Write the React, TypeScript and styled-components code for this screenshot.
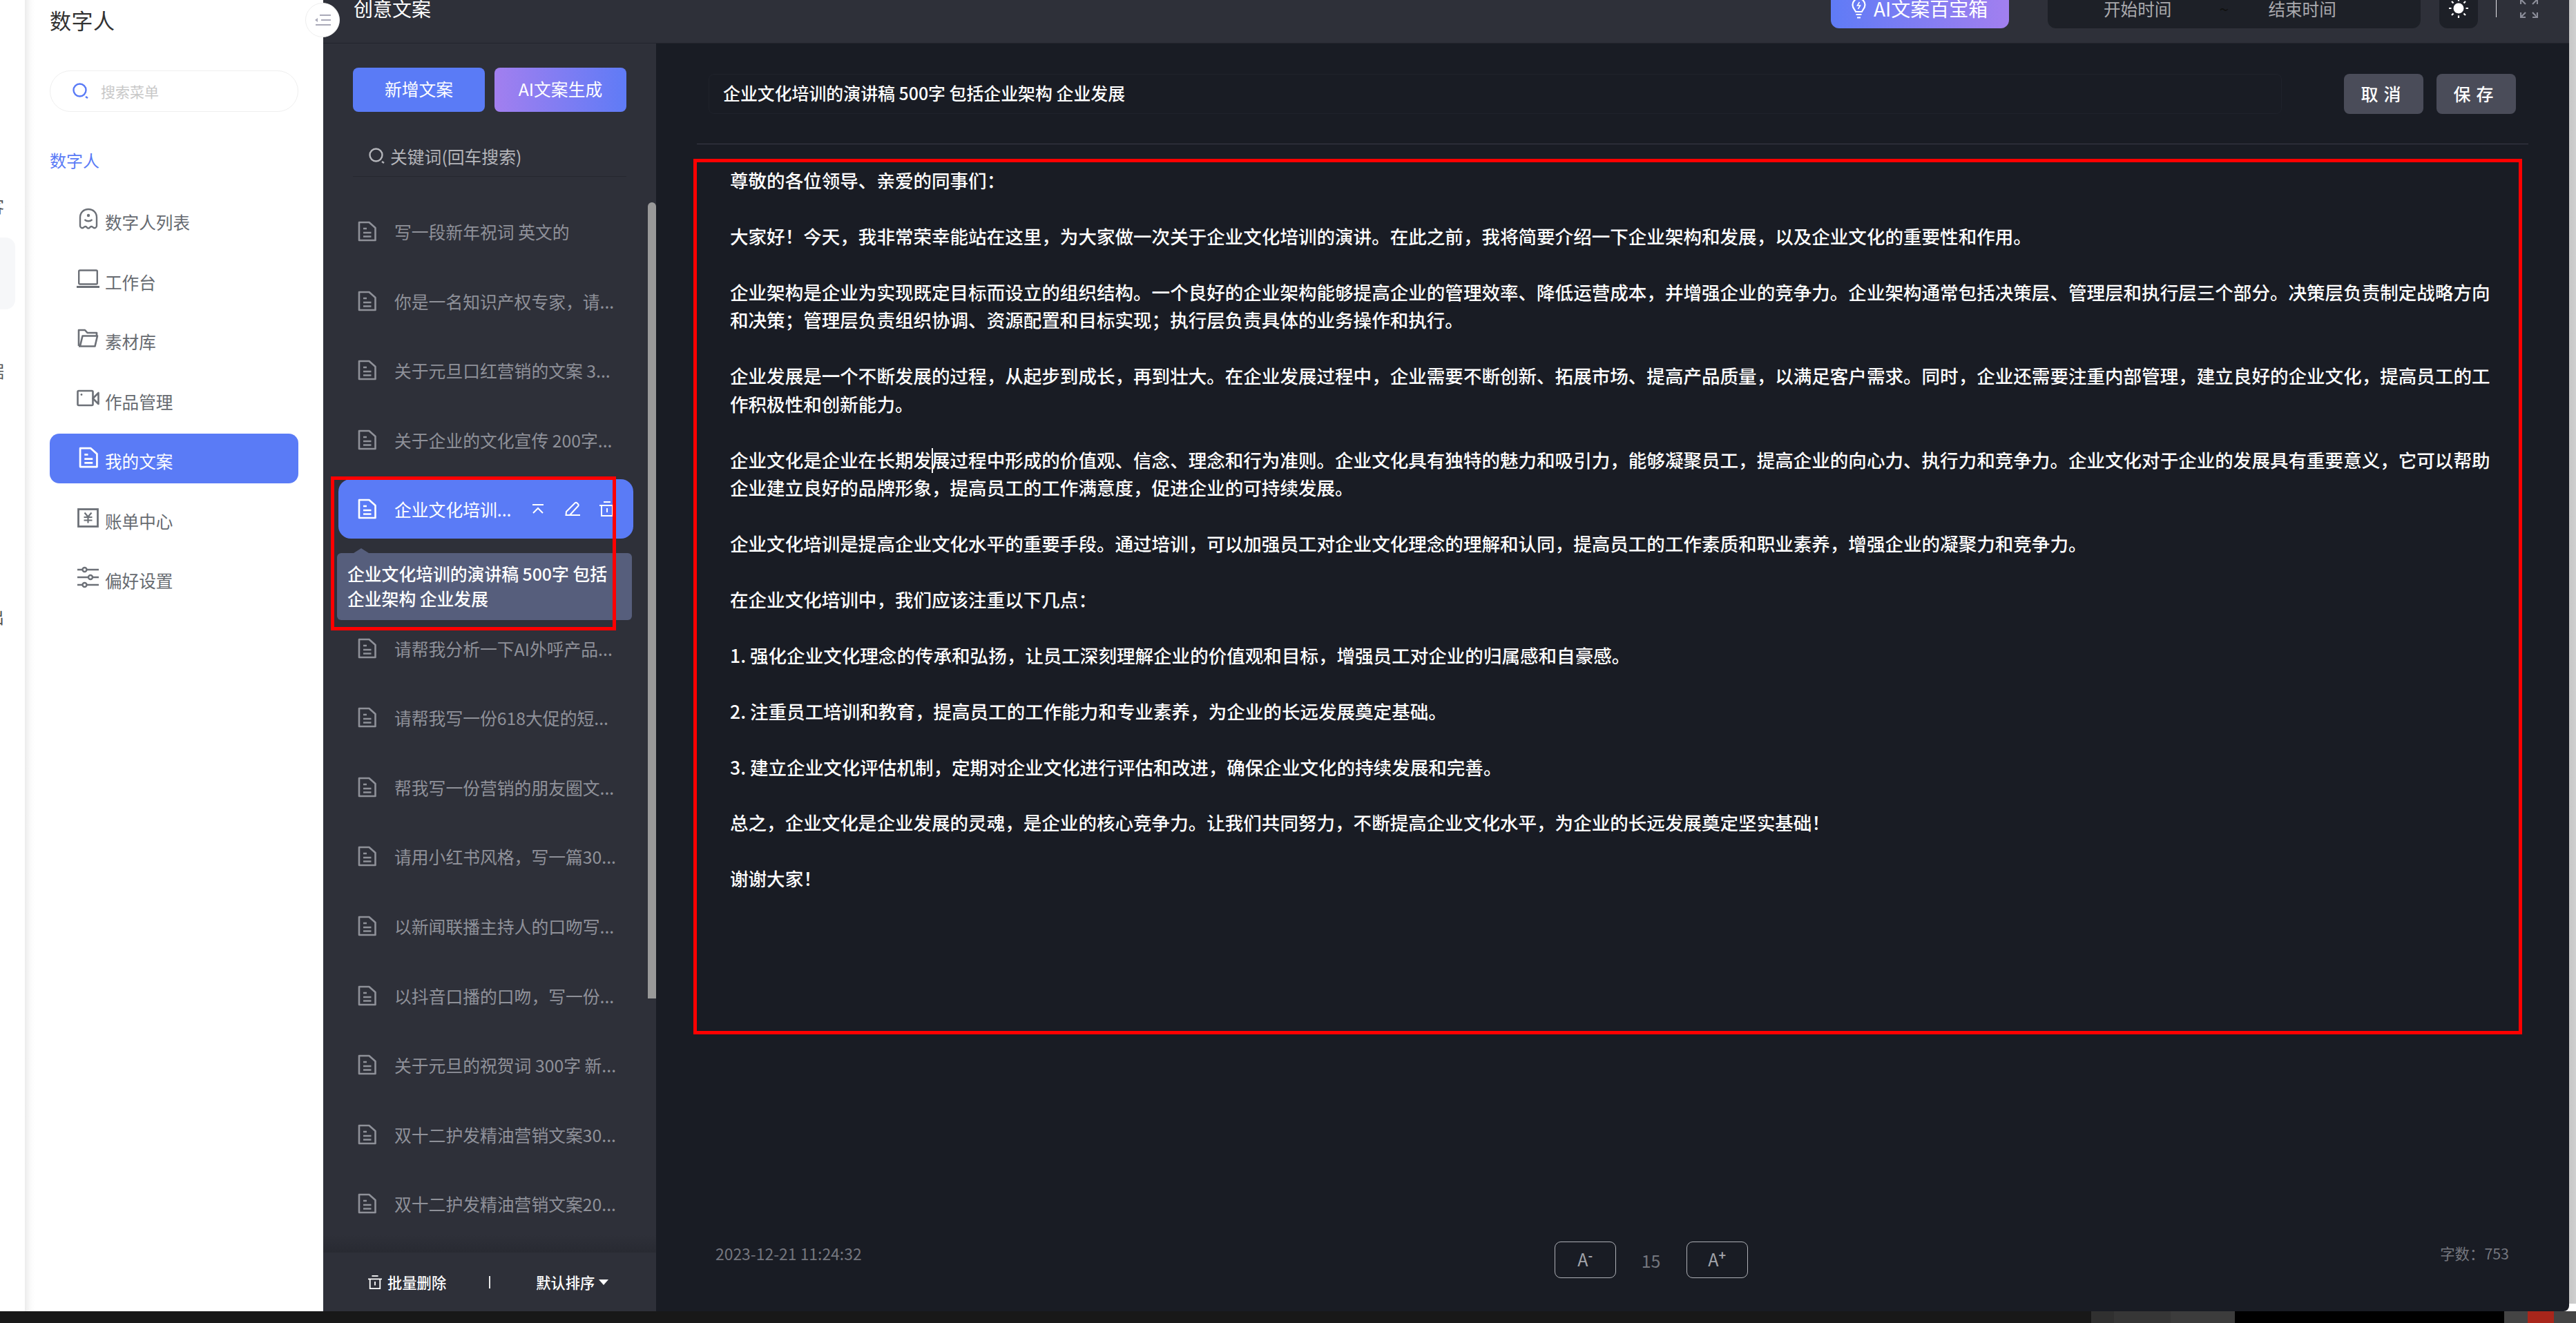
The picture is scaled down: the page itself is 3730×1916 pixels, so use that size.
import React from "react";
import styled, { createGlobalStyle } from "styled-components";

const GlobalStyle = createGlobalStyle`
  html, body {
    margin: 0;
    padding: 0;
    background: #fff;
    overflow: hidden;
    height: 100%;
  }
  * { box-sizing: border-box; }
  body {
    font-family: "Noto Sans CJK SC", "Noto Sans", sans-serif;
  }
`;

// the page in the picture is scrolled down by 18px
const Page = styled.div`
  margin-top: -18px;
  width: 3730px;
  height: 1934px;
  display: flex;
  flex-direction: column;
`;

const Shell = styled.div`
  position: relative;
  display: flex;
  height: 1917px;
  background: #fff;
`;

/* ---------- strip of the window behind ---------- */
const BackStrip = styled.div`
  width: 36px;
  padding-top: 304px;
  overflow: hidden;
  flex: none;
`;

const BackGlyph = styled.div<{ $gap: number }>`
  margin-top: ${(p) => p.$gap}px;
  margin-left: -18px;
  font-size: 24px;
  line-height: 24px;
  color: #555;
`;

const BackPanel = styled.div`
  margin-top: 34px;
  width: 22px;
  height: 104px;
  background: #f6f7f9;
  border-radius: 0 14px 14px 0;
`;

/* ---------- menu ---------- */
const Side = styled.aside`
  width: 432px;
  flex: none;
  padding: 27px 36px 0;
  background: linear-gradient(90deg, #ececec 0, #fafafa 8px, #fff 14px);
`;

const SideTitle = styled.div`
  font-size: 31px;
  line-height: 40px;
  color: #333;
  letter-spacing: 0.5px;
`;

const SearchPill = styled.div`
  margin-top: 53px;
  height: 60px;
  border: 1px solid #efefef;
  border-radius: 30px;
  display: flex;
  align-items: center;
  padding-left: 32px;
  gap: 17px;
  font-size: 21px;
  color: #c8c8c8;
`;

const SectionTitle = styled.div`
  margin-top: 54px;
  font-size: 24px;
  line-height: 32px;
  color: #5a7bf6;
`;

const MenuList = styled.div`
  margin-top: 34px;
  display: flex;
  flex-direction: column;
  gap: 14.5px;
`;

const MenuItem = styled.div<{ $active?: boolean }>`
  height: 72px;
  border-radius: 14px;
  display: flex;
  align-items: center;
  padding-left: 39px;
  font-size: 24.6px;
  color: ${(p) => (p.$active ? "#fff" : "#666a70")};
  background: ${(p) => (p.$active ? "#5a7bf6" : "transparent")};
  span {
    padding-top: 6px;
    margin-left: 8px;
  }
`;

const MenuIconBox = styled.div`
  width: 33px;
  flex: none;
  margin-top: -2px;
  display: flex;
  justify-content: center;
`;

const CollapseBtn = styled.div`
  position: absolute;
  left: 442px;
  top: 22px;
  width: 50px;
  height: 50px;
  border-radius: 50%;
  background: #fff;
  border: 1px solid #eee;
  display: flex;
  align-items: center;
  justify-content: center;
  z-index: 3;
`;

/* ---------- dark app ---------- */
const AppColumn = styled.div`
  width: 3252px;
  flex: none;
  display: flex;
  flex-direction: column;
  background: #191c24;
  border-bottom-right-radius: 8px;
  overflow: hidden;
`;

const TopBar = styled.header`
  height: 81px;
  flex: none;
  display: flex;
  align-items: flex-start;
  background: #2e3039;
  border-bottom: 1px solid #23252d;
  padding-left: 44px;
  padding-right: 45px;
`;

const TopTitle = styled.div`
  font-size: 28px;
  line-height: 60px;
  color: #fff;
  margin-right: auto;
`;

const TreasureBtn = styled.div`
  width: 258px;
  height: 59px;
  border-radius: 0 0 12px 12px;
  background: linear-gradient(90deg, #5f7bf6, #a27fef);
  display: flex;
  align-items: center;
  padding-left: 30px;
  gap: 11px;
  font-size: 28px;
  color: #fff;
`;

const RangeBox = styled.div`
  margin-left: 56px;
  width: 540px;
  height: 59px;
  border-radius: 0 0 12px 12px;
  background: #1d2027;
  display: flex;
  align-items: center;
  padding-left: 81px;
  font-size: 24.6px;
  color: #a9a9ad;
`;

const RangeSep = styled.span`
  margin: 0 55px 0 69px;
  width: 16px;
  color: #111;
`;

const ThemeBtn = styled.div`
  margin-left: 27px;
  width: 56px;
  height: 59px;
  border-radius: 0 0 12px 12px;
  background: #1d2027;
  display: flex;
  align-items: center;
  justify-content: center;
`;

const TopDivider = styled.div`
  margin-left: 26px;
  width: 1px;
  height: 43px;
  background: #e4e4e8;
`;

const FullscreenBox = styled.div`
  margin-left: 34px;
  margin-top: 16px;
  display: flex;
`;

const Body = styled.div`
  flex: 1;
  display: flex;
  min-height: 0;
`;

/* ---------- list of copy ---------- */
const ListPanel = styled.section`
  width: 482px;
  flex: none;
  display: flex;
  flex-direction: column;
  background: #2e3039;
  position: relative;
`;

const ListHead = styled.div`
  padding: 35px 43px 0;
`;

const ButtonRow = styled.div`
  display: flex;
  gap: 14px;
`;

const ActionBtn = styled.div<{ $gradient?: boolean }>`
  width: 191px;
  height: 64px;
  border-radius: 8px;
  display: flex;
  align-items: center;
  justify-content: center;
  padding-bottom: 5px;
  font-size: 24.8px;
  color: #fff;
  background: ${(p) =>
    p.$gradient ? "linear-gradient(90deg, #a27fef, #5f7bf6)" : "#5a7bf6"};
`;

const KeywordRow = styled.div`
  margin-top: 38px;
  height: 56px;
  border-bottom: 1px solid #25272e;
  display: flex;
  align-items: center;
  padding: 0 0 4px 23px;
  gap: 7px;
  font-size: 24.8px;
  color: #b4b5ba;
`;

const Rows = styled.div`
  flex: 1;
  min-height: 0;
  overflow: hidden;
  position: relative;
  padding-top: 36px;
  display: flex;
  flex-direction: column;
  gap: 14.6px;
  &::after {
    content: "";
    position: absolute;
    left: 0;
    right: 0;
    bottom: 0;
    height: 26px;
    background: linear-gradient(180deg, rgba(36, 38, 45, 0), #282a32);
  }
`;

const Scroll = styled.div`
  position: absolute;
  right: 0;
  top: 37px;
  width: 12px;
  height: 1153px;
  background: #999;
  border-radius: 6px 6px 0 0;
`;

const Row = styled.div<{ $active?: boolean; $tipped?: boolean }>`
  position: relative;
  flex: none;
  margin-left: 22px;
  width: 427px;
  height: 86px;
  border-radius: 18px;
  display: flex;
  align-items: center;
  padding-left: 28px;
  gap: 26px;
  font-size: 24.8px;
  color: ${(p) => (p.$active ? "#fff" : "#8f9199")};
  background: ${(p) => (p.$active ? "#5a7bf6" : "transparent")};
  margin-bottom: ${(p) => (p.$tipped ? "100.6px" : "0")};
  white-space: nowrap;
  svg {
    flex: none;
  }
`;

const RowTools = styled.div`
  margin-left: auto;
  margin-right: 27px;
  display: flex;
  align-items: center;
  gap: 28px;
  svg:first-child {
    margin-right: 3px;
  }
`;

const Tip = styled.div`
  position: absolute;
  left: -2px;
  top: 107px;
  width: 427px;
  height: 97px;
  background: #565e7c;
  border-radius: 6px;
  padding: 11px 30px 11px 15px;
  font-size: 24.8px;
  font-weight: 500;
  line-height: 36px;
  color: #fff;
  white-space: normal;
  z-index: 2;
  &::before {
    content: "";
    position: absolute;
    left: 24px;
    top: -7px;
    border-left: 11px solid transparent;
    border-right: 11px solid transparent;
    border-bottom: 7px solid #565e7c;
  }
`;

// red annotation drawn over the selected row and its tooltip
const RowMark = styled.div`
  position: absolute;
  left: -11px;
  top: -4px;
  width: 413px;
  height: 223px;
  border: 5px solid #ff0000;
  z-index: 3;
`;

const ListFoot = styled.div`
  height: 85px;
  flex: none;
  display: flex;
  align-items: center;
  padding-left: 65px;
  font-size: 21.3px;
  font-weight: 500;
  color: #fff;
  background: #2e3039;
`;

const FootGroup = styled.div`
  display: flex;
  align-items: center;
  gap: 8px;
`;

const FootDivider = styled.div`
  margin: 0 66px 0 62px;
  width: 2px;
  height: 18px;
  background: #e8e8e8;
`;

const Caret = styled.span`
  width: 0;
  height: 0;
  margin-left: -2px;
  border-left: 7px solid transparent;
  border-right: 7px solid transparent;
  border-top: 8px solid #fff;
`;

/* ---------- editor ---------- */
const Main = styled.main`
  flex: 1;
  min-width: 0;
  padding-top: 44px;
`;

const MainHead = styled.div`
  display: flex;
  padding-left: 76px;
  gap: 19px;
`;

const TitleBox = styled.div`
  width: 2278px;
  height: 58px;
  margin-right: 71px;
  border: 1px solid #1f222b;
  border-radius: 8px;
  display: flex;
  align-items: center;
  padding: 0 0 5px 20px;
  font-size: 24.9px;
  font-weight: 500;
  color: #fff;
`;

const GreyBtn = styled.div`
  width: 115px;
  height: 58px;
  border-radius: 8px;
  background: #4a4c59;
  display: flex;
  align-items: center;
  justify-content: center;
  padding-bottom: 3px;
  font-size: 25px;
  font-weight: 500;
  letter-spacing: 8px;
  color: #fff;
`;

const HeadRule = styled.div`
  margin: 43px 0 0 59px;
  width: 2652px;
  height: 1px;
  background: #3a3c48;
`;

const RedBox = styled.div`
  position: relative;
  margin: 21px 0 0 54px;
  width: 2648px;
  height: 1268px;
  border: 5px solid #ff0000;
  padding: 6px 0 0 48px;
`;

const Copy = styled.div`
  width: 2556px;
  font-size: 26.55px;
  font-weight: 500;
  line-height: 40.45px;
  color: #fff;
  white-space: pre-wrap;
`;

const MouseBeam = styled.div`
  position: absolute;
  left: 340px;
  top: 414px;
  width: 2px;
  height: 36px;
  background: #fff;
`;

const MainFoot = styled.div`
  margin-top: 300px;
  display: flex;
  align-items: flex-start;
  padding: 0 87px 0 86px;
  line-height: 30px;
  color: #74767e;
`;

const DateNote = styled.div`
  margin-top: 2px;
  font-size: 22.9px;
`;

const SizeGroup = styled.div`
  margin-left: 1003px;
  display: flex;
  align-items: center;
`;

const SizeBtn = styled.div`
  width: 89px;
  height: 53px;
  border: 1px solid #aeb0b6;
  border-radius: 9px;
  display: flex;
  align-items: center;
  justify-content: center;
  padding-bottom: 3px;
  font-size: 25px;
  line-height: 25px;
  color: #a2a4aa;
  sup {
    font-size: 18px;
    line-height: 18px;
    font-weight: 700;
    align-self: flex-start;
    margin-top: 9px;
  }
`;

const SizeValue = styled.div`
  width: 102px;
  text-align: center;
  font-size: 25px;
  color: #74767e;
`;

const CharCount = styled.div`
  margin: 2px 0 0 auto;
  font-size: 21.4px;
`;

const RightStrip = styled.div`
  flex: 1;
  height: 1906px;
  background: linear-gradient(90deg, #c6c6c6, #d0d0d0);
`;

/* ---------- what is below the window ---------- */
const BottomBar = styled.footer`
  height: 17px;
  display: flex;
  background: #181818;
`;

const BarPiece = styled.div<{ $w: number; $c: string }>`
  width: ${(p) => p.$w}px;
  background: ${(p) => p.$c};
  flex: none;
`;

/* ---------- drawings ---------- */
const SearchIcon = ({ color, size = 24 }: { color: string; size?: number }) => (
  <svg width={size} height={size} viewBox="0 0 24 24" fill="none" stroke={color} strokeWidth="2.4">
    <circle cx="10.5" cy="10.5" r="9" />
    <path d="M19 20l3 2" />
  </svg>
);

const DocIcon = ({ color, size = 27 }: { color: string; size?: number }) => (
  <svg width={size} height={(size * 30) / 27} viewBox="0 0 27 30" fill="none" stroke={color} strokeWidth="2.6">
    <path d="M2 2h14.500L25.500 10v18H2z" strokeLinejoin="round" />
    <path d="M8 11h5M8 17h11.500M8 22.500h11.500" />
  </svg>
);

const GhostIcon = () => (
  <svg width="30" height="32" viewBox="0 0 30 32" fill="none" stroke="#6c7077" strokeWidth="2.4">
    <path d="M3 14c0-7 5-12 12-12s12 5 12 12v12c0 3-3 4-5 2.500-2-2-3.500-2-5 0-1.200 1.500-2.800 1.500-4 0-1.500-2-3-2-5 0C6 30 3 29 3 26z" />
    <circle cx="15" cy="11" r="2.200" fill="#6c7077" stroke="none" />
    <path d="M9.500 17c2.500 3 8.500 3 11 0" />
  </svg>
);

const LaptopIcon = () => (
  <svg width="33" height="28" viewBox="0 0 33 28" fill="none" stroke="#6c7077" strokeWidth="2.4">
    <rect x="3.200" y="1.500" width="26.600" height="20" rx="1.500" />
    <path d="M0 25.500h33" strokeWidth="3" />
  </svg>
);

const FolderIcon = () => (
  <svg width="31" height="28" viewBox="0 0 31 28" fill="none" stroke="#6c7077" strokeWidth="2.6">
    <path d="M2 25V2h9l3.500 4H28v4" strokeLinejoin="round" />
    <path d="M2 25.500h23.500L29 10.500H7.500L4 25" strokeLinejoin="round" />
  </svg>
);

const VideoIcon = () => (
  <svg width="33" height="26" viewBox="0 0 33 26" fill="none" stroke="#6c7077" strokeWidth="2.6">
    <rect x="1.500" y="2" width="22" height="21" rx="1.500" />
    <path d="M23.500 13L31.500 5v16z" strokeLinejoin="round" />
    <circle cx="7" cy="7.500" r="1.400" fill="#6c7077" stroke="none" />
  </svg>
);

const BillIcon = () => (
  <svg width="31" height="28" viewBox="0 0 31 28" fill="none" stroke="#6c7077" strokeWidth="2.800">
    <rect x="1.500" y="1.500" width="28" height="25" />
    <path d="M10.500 6.500l5 6 5-6M9.500 13h12M9.500 17.500h12M15.500 12.500v9" strokeWidth="2.200" />
  </svg>
);

const SlidersIcon = () => (
  <svg width="31" height="32" viewBox="0 0 31 32" fill="none" stroke="#6c7077" strokeWidth="2.400">
    <path d="M0 5h7.500M13 5h18M0 16h16M22 16h9M0 27h7.500M13 27h18" />
    <circle cx="10.500" cy="5" r="3" />
    <circle cx="19" cy="16" r="3" />
    <circle cx="10.500" cy="27" r="3" />
  </svg>
);

const CollapseIcon = () => (
  <svg width="24" height="18" viewBox="0 0 24 18" fill="none" stroke="#a9a9b8" strokeWidth="1.800">
    <path d="M8 2h16M10 9h14M2 16h22" />
    <path d="M5 6v6L1 9z" fill="#a9a9b8" stroke="none" />
  </svg>
);

const BulbIcon = () => (
  <svg width="21" height="32" viewBox="0 0 21 32" fill="none" stroke="#fff" strokeWidth="2.200">
    <path d="M6 21c-1-3-4.500-5-4.500-10a9 9 0 0 1 18 0c0 5-3.500 7-4.500 10z" />
    <path d="M6.500 25h8M8 29.500h5" />
    <path d="M11.500 7l-3 5h4l-3 5" strokeWidth="1.600" />
  </svg>
);

const SunIcon = () => (
  <svg width="28" height="28" viewBox="0 0 28 28" fill="#fff" stroke="#fff" strokeWidth="2.200">
    <circle cx="14" cy="14" r="7.500" stroke="none" />
    <path d="M14 0v3.500M14 24.500V28M0 14h3.500M24.500 14H28M4 4l2.500 2.500M21.500 21.500L24 24M4 24l2.500-2.500M21.500 6.500L24 4" />
  </svg>
);

const FullscreenIcon = () => (
  <svg width="26" height="28" viewBox="0 0 26 28" fill="none" stroke="#8b8d99" strokeWidth="2.200">
    <path d="M1 8V1h7M1 1l7 7M25 8V1h-7M25 1l-7 7M1 20v7h7M1 27l7-7M25 20v7h-7M25 27l-7-7" />
  </svg>
);

const PinTopIcon = () => (
  <svg width="16" height="16" viewBox="0 0 16 16" fill="none" stroke="#fff" strokeWidth="2">
    <path d="M0 2h16M1 14l7-7 7 7" />
  </svg>
);

const PencilIcon = () => (
  <svg width="22" height="22" viewBox="0 0 22 22" fill="none" stroke="#fff" strokeWidth="2">
    <path d="M1.500 20L2 15 14.500 2.500c1-1 2-1 3 0l1.500 1.500c1 1 1 2 0 3L7 20z" />
    <path d="M7 20h15" />
  </svg>
);

const TrashIcon = ({ w = 22 }: { w?: number }) => (
  <svg width={w} height={w} viewBox="0 0 22 22" fill="none" stroke="#fff" strokeWidth="2">
    <path d="M6 1h10M0 6h22M3 6v15h16V6M11 10v6" />
  </svg>
);

const docs = [
  "写一段新年祝词 英文的",
  "你是一名知识产权专家，请...",
  "关于元旦口红营销的文案 3...",
  "关于企业的文化宣传 200字...",
];

const docsAfter = [
  "请帮我分析一下AI外呼产品...",
  "请帮我写一份618大促的短...",
  "帮我写一份营销的朋友圈文...",
  "请用小红书风格，写一篇30...",
  "以新闻联播主持人的口吻写...",
  "以抖音口播的口吻，写一份...",
  "关于元旦的祝贺词 300字 新...",
  "双十二护发精油营销文案30...",
  "双十二护发精油营销文案20...",
];

const speech = `尊敬的各位领导、亲爱的同事们：

大家好！今天，我非常荣幸能站在这里，为大家做一次关于企业文化培训的演讲。在此之前，我将简要介绍一下企业架构和发展，以及企业文化的重要性和作用。

企业架构是企业为实现既定目标而设立的组织结构。一个良好的企业架构能够提高企业的管理效率、降低运营成本，并增强企业的竞争力。企业架构通常包括决策层、管理层和执行层三个部分。决策层负责制定战略方向和决策；管理层负责组织协调、资源配置和目标实现；执行层负责具体的业务操作和执行。

企业发展是一个不断发展的过程，从起步到成长，再到壮大。在企业发展过程中，企业需要不断创新、拓展市场、提高产品质量，以满足客户需求。同时，企业还需要注重内部管理，建立良好的企业文化，提高员工的工作积极性和创新能力。

企业文化是企业在长期发展过程中形成的价值观、信念、理念和行为准则。企业文化具有独特的魅力和吸引力，能够凝聚员工，提高企业的向心力、执行力和竞争力。企业文化对于企业的发展具有重要意义，它可以帮助企业建立良好的品牌形象，提高员工的工作满意度，促进企业的可持续发展。

企业文化培训是提高企业文化水平的重要手段。通过培训，可以加强员工对企业文化理念的理解和认同，提高员工的工作素质和职业素养，增强企业的凝聚力和竞争力。

在企业文化培训中，我们应该注重以下几点：

1. 强化企业文化理念的传承和弘扬，让员工深刻理解企业的价值观和目标，增强员工对企业的归属感和自豪感。

2. 注重员工培训和教育，提高员工的工作能力和专业素养，为企业的长远发展奠定基础。

3. 建立企业文化评估机制，定期对企业文化进行评估和改进，确保企业文化的持续发展和完善。

总之，企业文化是企业发展的灵魂，是企业的核心竞争力。让我们共同努力，不断提高企业文化水平，为企业的长远发展奠定坚实基础！

谢谢大家！`;

export default function App() {
  return (
    <>
      <GlobalStyle />
      <Page>
        <Shell>
          <BackStrip>
            <BackGlyph $gap={0}>客</BackGlyph>
            <BackPanel />
            <BackGlyph $gap={77}>据</BackGlyph>
            <BackGlyph $gap={332}>出</BackGlyph>
          </BackStrip>

          <Side>
            <SideTitle>数字人</SideTitle>
            <SearchPill>
              <SearchIcon color="#5a7bf6" />
              搜索菜单
            </SearchPill>
            <SectionTitle>数字人</SectionTitle>
            <MenuList>
              <MenuItem><MenuIconBox><GhostIcon /></MenuIconBox><span>数字人列表</span></MenuItem>
              <MenuItem><MenuIconBox><LaptopIcon /></MenuIconBox><span>工作台</span></MenuItem>
              <MenuItem><MenuIconBox><FolderIcon /></MenuIconBox><span>素材库</span></MenuItem>
              <MenuItem><MenuIconBox><VideoIcon /></MenuIconBox><span>作品管理</span></MenuItem>
              <MenuItem $active><MenuIconBox><DocIcon color="#fff" size={28} /></MenuIconBox><span>我的文案</span></MenuItem>
              <MenuItem><MenuIconBox><BillIcon /></MenuIconBox><span>账单中心</span></MenuItem>
              <MenuItem><MenuIconBox><SlidersIcon /></MenuIconBox><span>偏好设置</span></MenuItem>
            </MenuList>
          </Side>

          <CollapseBtn>
            <CollapseIcon />
          </CollapseBtn>

          <AppColumn>
            <TopBar>
              <TopTitle>创意文案</TopTitle>
              <TreasureBtn>
                <BulbIcon />
                AI文案百宝箱
              </TreasureBtn>
              <RangeBox>
                开始时间
                <RangeSep>~</RangeSep>
                结束时间
              </RangeBox>
              <ThemeBtn>
                <SunIcon />
              </ThemeBtn>
              <TopDivider />
              <FullscreenBox>
                <FullscreenIcon />
              </FullscreenBox>
            </TopBar>

            <Body>
              <ListPanel>
                <ListHead>
                  <ButtonRow>
                    <ActionBtn>新增文案</ActionBtn>
                    <ActionBtn $gradient>AI文案生成</ActionBtn>
                  </ButtonRow>
                  <KeywordRow>
                    <SearchIcon color="#b4b5ba" size={24} />
                    关键词(回车搜索)
                  </KeywordRow>
                </ListHead>
                <Rows>
                  {docs.map((d) => (
                    <Row key={d}>
                      <DocIcon color="#8f9199" />
                      {d}
                    </Row>
                  ))}
                  <Row $active $tipped>
                    <DocIcon color="#fff" />
                    企业文化培训...
                    <RowTools>
                      <PinTopIcon />
                      <PencilIcon />
                      <TrashIcon />
                    </RowTools>
                    <Tip>企业文化培训的演讲稿 500字 包括企业架构 企业发展</Tip>
                    <RowMark />
                  </Row>
                  {docsAfter.map((d) => (
                    <Row key={d}>
                      <DocIcon color="#8f9199" />
                      {d}
                    </Row>
                  ))}
                  <Scroll />
                </Rows>
                <ListFoot>
                  <FootGroup>
                    <TrashIcon w={20} />
                    批量删除
                  </FootGroup>
                  <FootDivider />
                  <FootGroup>
                    默认排序
                    <Caret />
                  </FootGroup>
                </ListFoot>
              </ListPanel>

              <Main>
                <MainHead>
                  <TitleBox>企业文化培训的演讲稿 500字 包括企业架构 企业发展</TitleBox>
                  <GreyBtn>取消</GreyBtn>
                  <GreyBtn>保存</GreyBtn>
                </MainHead>
                <HeadRule />
                <RedBox>
                  <Copy>{speech}</Copy>
                  <MouseBeam />
                </RedBox>
                <MainFoot>
                  <DateNote>2023-12-21 11:24:32</DateNote>
                  <SizeGroup>
                    <SizeBtn>A<sup>-</sup></SizeBtn>
                    <SizeValue>15</SizeValue>
                    <SizeBtn>A<sup>+</sup></SizeBtn>
                  </SizeGroup>
                  <CharCount>字数：753</CharCount>
                </MainFoot>
              </Main>
            </Body>
          </AppColumn>
          <RightStrip />
        </Shell>
        <BottomBar>
          <BarPiece $w={3028} $c="#181818" />
          <BarPiece $w={33} $c="#303030" />
          <BarPiece $w={82} $c="#363636" />
          <BarPiece $w={93} $c="#3c3c3c" />
          <BarPiece $w={390} $c="#000" />
          <BarPiece $w={34} $c="#444" />
          <BarPiece $w={38} $c="#a8261b" />
          <BarPiece $w={32} $c="#444" />
        </BottomBar>
      </Page>
    </>
  );
}
